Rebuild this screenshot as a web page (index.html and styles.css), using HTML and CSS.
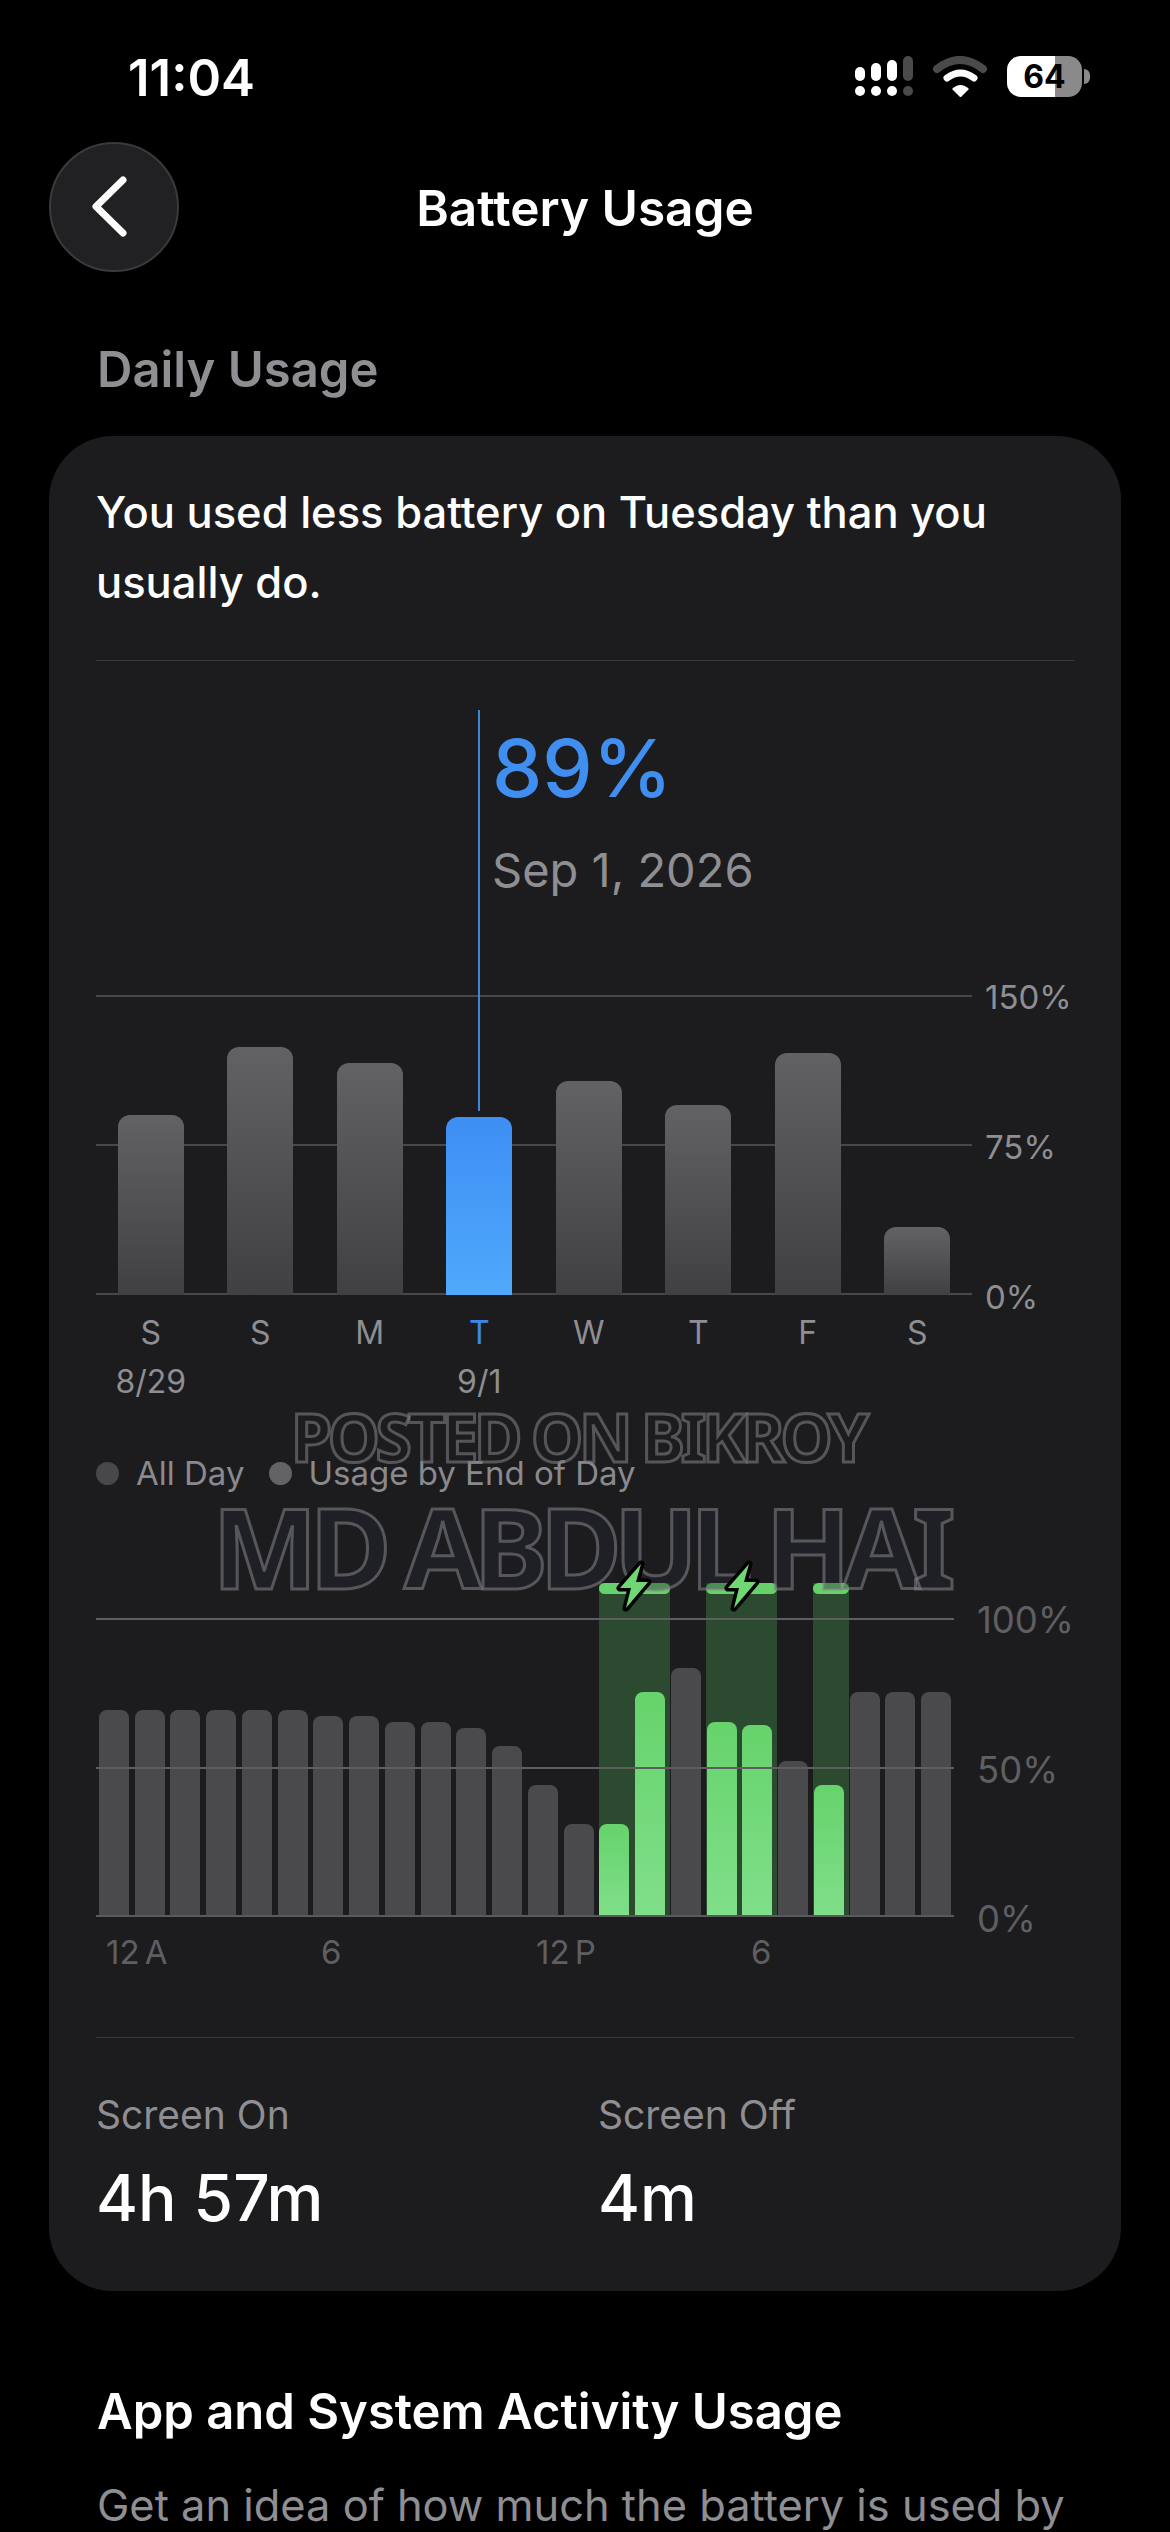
FILE: index.html
```html
<!DOCTYPE html>
<html>
<head>
<meta charset="utf-8">
<title>Battery Usage</title>
<link rel="stylesheet" href="styles.css">
</head>
<body>

<div class="status">
  <div class="time">11:04</div>
  <div class="status-icons">
    <svg class="signal" width="58" height="41" viewBox="0 0 58 41">
      <rect x="0" y="11" width="10" height="14" rx="5" fill="#fff"/>
      <rect x="16" y="7" width="10" height="18" rx="5" fill="#fff"/>
      <rect x="32" y="4" width="10" height="21" rx="5" fill="#fff"/>
      <rect x="48" y="0" width="10" height="25" rx="5" fill="#4a4a4a"/>
      <circle cx="5" cy="35" r="5" fill="#fff"/>
      <circle cx="21" cy="35" r="5" fill="#fff"/>
      <circle cx="37" cy="35" r="5" fill="#fff"/>
      <circle cx="53" cy="35" r="5" fill="#4a4a4a"/>
    </svg>
    <svg class="wifi" width="54" height="41" viewBox="0 0 54 41">
      <path d="M4 13 Q27 -5 50 13" fill="none" stroke="#4a4a4a" stroke-width="8" stroke-linecap="round"/>
      <path d="M14 22 Q27.5 12 41 22" fill="none" stroke="#fff" stroke-width="7" stroke-linecap="round"/>
      <path d="M19 33 Q27.5 25 36 33 L28.5 40.5 Q27.5 41.5 26.5 40.5 Z" fill="#fff"/>
    </svg>
    <div class="battery">64</div>
  </div>
</div>

<div class="nav">
  <div class="back">
    <svg width="38" height="61" viewBox="0 0 38 61">
      <path d="M33 4 L6 30.5 L33 57" fill="none" stroke="#fff" stroke-width="7" stroke-linecap="round" stroke-linejoin="round"/>
    </svg>
  </div>
  <div class="nav-title">Battery Usage</div>
</div>

<h2 class="section-title">Daily Usage</h2>

<div class="card">
  <p class="summary">You used less battery on Tuesday than you usually do.</p>
  <div class="divider"></div>

  <div class="callout">
    <div class="callout-value">89%</div>
    <div class="callout-date">Sep 1, 2026</div>
  </div>

  <div class="chart-row">
    <div class="week-plot">
      <div class="week-slot"><div class="week-bar" style="height:180px"></div></div>
      <div class="week-slot"><div class="week-bar" style="height:248px"></div></div>
      <div class="week-slot"><div class="week-bar" style="height:232px"></div></div>
      <div class="week-slot"><div class="week-bar week-bar-on" style="height:178px"><div class="marker"></div></div></div>
      <div class="week-slot"><div class="week-bar" style="height:214px"></div></div>
      <div class="week-slot"><div class="week-bar" style="height:190px"></div></div>
      <div class="week-slot"><div class="week-bar" style="height:242px"></div></div>
      <div class="week-slot"><div class="week-bar" style="height:68px"></div></div>
    </div>
    <div class="axis week-axis">
      <span>150%</span>
      <span>75%</span>
      <span>0%</span>
    </div>
  </div>

  <div class="week-labels">
    <span>S</span><span>S</span><span>M</span><span class="label-on">T</span><span>W</span><span>T</span><span>F</span><span>S</span>
  </div>
  <div class="week-dates">
    <span>8/29</span><span></span><span></span><span>9/1</span><span></span><span></span><span></span><span></span>
  </div>

  <div class="legend">
    <i class="dot"></i><span>All Day</span>
    <i class="dot dot-light"></i><span>Usage by End of Day</span>
  </div>

  <div class="chart-row">
    <div class="hour-plot">
      <div class="charge-layer">
        <div class="charge charge-a">
          <svg class="bolt" width="40" height="55" viewBox="0 0 40 55"><path d="M27 6 L6 30 H17 L12 50 L34 24 H22 Z" fill="#6fd873" stroke="#000" stroke-width="7" stroke-linejoin="round" paint-order="stroke"/></svg>
        </div>
        <div class="charge charge-b">
          <svg class="bolt" width="40" height="55" viewBox="0 0 40 55"><path d="M27 6 L6 30 H17 L12 50 L34 24 H22 Z" fill="#6fd873" stroke="#000" stroke-width="7" stroke-linejoin="round" paint-order="stroke"/></svg>
        </div>
        <div class="charge charge-c"></div>
      </div>
      <div class="hour-bars">
        <div class="hour-bar" style="height:207px"></div>
        <div class="hour-bar" style="height:207px"></div>
        <div class="hour-bar" style="height:207px"></div>
        <div class="hour-bar" style="height:207px"></div>
        <div class="hour-bar" style="height:207px"></div>
        <div class="hour-bar" style="height:207px"></div>
        <div class="hour-bar" style="height:201px"></div>
        <div class="hour-bar" style="height:201px"></div>
        <div class="hour-bar" style="height:195px"></div>
        <div class="hour-bar" style="height:195px"></div>
        <div class="hour-bar" style="height:189px"></div>
        <div class="hour-bar" style="height:171px"></div>
        <div class="hour-bar" style="height:132px"></div>
        <div class="hour-bar" style="height:93px"></div>
        <div class="hour-bar hour-bar-green" style="height:93px"></div>
        <div class="hour-bar hour-bar-green" style="height:225px"></div>
        <div class="hour-bar" style="height:249px"></div>
        <div class="hour-bar hour-bar-green" style="height:195px"></div>
        <div class="hour-bar hour-bar-green" style="height:192px"></div>
        <div class="hour-bar" style="height:156px"></div>
        <div class="hour-bar hour-bar-green" style="height:132px"></div>
        <div class="hour-bar" style="height:225px"></div>
        <div class="hour-bar" style="height:225px"></div>
        <div class="hour-bar" style="height:225px"></div>
      </div>
    </div>
    <div class="axis hour-axis">
      <span>100%</span>
      <span>50%</span>
      <span>0%</span>
    </div>
  </div>

  <div class="hour-labels">
    <span>12 A</span><span>6</span><span>12 P</span><span>6</span>
  </div>

  <div class="divider divider-low"></div>

  <div class="stats">
    <div>
      <div class="stat-label">Screen On</div>
      <div class="stat-value">4h 57m</div>
    </div>
    <div>
      <div class="stat-label">Screen Off</div>
      <div class="stat-value">4m</div>
    </div>
  </div>

  <div class="mark mark-posted">POSTED ON BIKROY</div>
  <div class="mark mark-name">MD ABDUL HAI</div>
</div>

<h3 class="activity-title">App and System Activity Usage</h3>
<p class="activity-text">Get an idea of how much the battery is used by</p>

</body>
</html>
```
FILE: styles.css
```css
html, body
{
  margin:0;
  padding:0;
  height:2532px;
  overflow:hidden;
  background-color:#000;
  color:#fff;
  font-family:"Inter","Liberation Sans",sans-serif;
}

/* status bar */
.status
{
  height:141px;
  box-sizing:border-box;
  padding:56px 88px 0 128px;
  display:flex;
  justify-content:space-between;
}
.time
{
  padding-top:1px;
  font-size:51px;
  font-weight:600;
  line-height:42px;
}
.status-icons
{
  display:flex;
  align-items:flex-start;
  gap:20px;
}
.battery
{
  position:relative;
  width:75px;
  height:41px;
  border-radius:14px;
  background:linear-gradient(to right,#fff 64%,#8a8a8a 64%);
  color:#000;
  font-size:32px;
  font-weight:700;
  line-height:41px;
  text-align:center;
}
.battery:after
{
  content:"";
  position:absolute;
  left:77px;
  top:13px;
  width:6px;
  height:15px;
  border-radius:0 8px 8px 0;
  background-color:#8a8a8a;
}

/* nav */
.nav
{
  height:131px;
  padding:0 49px;
  display:grid;
  grid-template-columns:130px 1fr 130px;
  align-items:center;
}
.back
{
  width:130px;
  height:130px;
  box-sizing:border-box;
  border-radius:50%;
  background-color:#212123;
  border:2px solid #3a3a3c;
  display:flex;
  align-items:center;
  justify-content:center;
  padding-right:10px;
}
.nav-title
{
  padding-top:2px;
  text-align:center;
  font-size:49.5px;
  font-weight:600;
}
.section-title
{
  margin:72px 0 40px 97px;
  font-size:49px;
  line-height:52px;
  font-weight:600;
  color:#8e8e93;
}

/* card */
.card
{
  position:relative;
  margin:0 49px;
  padding:41px 47px 55px;
  border-radius:64px;
  background-color:#1c1c1e;
}
.summary
{
  margin:0;
  font-size:43.5px;
  line-height:70px;
  font-weight:500;
}
.divider
{
  margin-top:43px;
  height:1px;
  background-color:#38383a;
}
.divider-low
{
  margin-top:65px;
}
.callout
{
  height:334px;
  box-sizing:border-box;
  padding:62px 0 0 396px;
}
.callout-value
{
  font-size:80px;
  line-height:90px;
  font-weight:500;
  color:#3f8ef0;
}
.callout-date
{
  margin-top:29px;
  font-size:47px;
  line-height:56px;
  color:#8e8e93;
}

/* charts */
.chart-row
{
  display:flex;
}
.axis
{
  display:flex;
  flex-direction:column;
  justify-content:space-between;
  margin:-18px 0 -22px;
}
.axis span
{
  line-height:40px;
}
.week-axis
{
  margin-left:13px;
  font-size:33px;
  color:#8e8e93;
}
.hour-axis
{
  margin-top:107px;
  margin-left:23px;
  font-size:36.5px;
  color:#5f5f63;
}
.week-plot
{
  width:876px;
  height:300px;
  display:flex;
  align-items:flex-end;
  background:
    linear-gradient(#48484a,#48484a) 0 0/100% 2px no-repeat,
    linear-gradient(#48484a,#48484a) 0 50%/100% 2px no-repeat,
    linear-gradient(#48484a,#48484a) 0 100%/100% 2px no-repeat;
}
.week-slot
{
  flex:1;
  display:flex;
  justify-content:center;
}
.week-bar
{
  position:relative;
  width:66px;
  border-radius:12px 12px 0 0;
  background:linear-gradient(#626265,#404042);
}
.week-bar-on
{
  background:linear-gradient(#3e8ef4,#4fa9fb);
}
.marker
{
  position:absolute;
  left:32px;
  bottom:100%;
  margin-bottom:6px;
  width:2px;
  height:401px;
  background-color:#3f86d6;
}
.week-labels, .week-dates
{
  width:876px;
  display:grid;
  grid-template-columns:repeat(8,1fr);
  text-align:center;
  font-size:32px;
  line-height:40px;
  color:#8e8e93;
}
.week-labels
{
  margin-top:18px;
}
.week-dates
{
  margin-top:9px;
}
.label-on
{
  color:#3f86e8;
}
.legend
{
  margin-top:51px;
  display:flex;
  align-items:center;
  font-size:33px;
  line-height:40px;
  color:#8a8a8e;
}
.dot
{
  width:23px;
  height:23px;
  border-radius:50%;
  margin-right:17px;
  background-color:#48484a;
}
.dot-light
{
  margin-left:25px;
  margin-right:16px;
  background-color:#636366;
}
.hour-plot
{
  position:relative;
  margin-top:125px;
  width:858px;
  height:299px;
}
.hour-plot:after
{
  content:"";
  position:absolute;
  inset:0;
  background:
    linear-gradient(#5e5e61,#5e5e61) 0 0/100% 2px no-repeat,
    linear-gradient(#5e5e61,#5e5e61) 0 50%/100% 2px no-repeat,
    linear-gradient(#5a5a5d,#5a5a5d) 0 100%/100% 2px no-repeat;
}
.charge-layer
{
  position:absolute;
  top:-35px;
  bottom:0;
  left:2px;
  right:-2px;
  display:grid;
  grid-template-columns:repeat(24,1fr);
}
.charge
{
  position:relative;
  background-color:#2b4a2f;
}
.charge:before
{
  content:"";
  position:absolute;
  left:0;
  right:0;
  top:0;
  height:11px;
  border-radius:6px;
  background-color:#66d06a;
}
.charge-a
{
  grid-column:15 / 17;
}
.charge-b
{
  grid-column:18 / 20;
}
.charge-c
{
  grid-column:21 / 22;
}
.bolt
{
  position:absolute;
  left:50%;
  top:-25px;
  margin-left:-20px;
  z-index:3;
}
.hour-bars
{
  position:relative;
  height:100%;
  display:grid;
  grid-template-columns:repeat(24,1fr);
  align-items:end;
  justify-items:center;
}
.hour-bar
{
  width:30px;
  border-radius:8px 8px 0 0;
  background-color:#4a4a4d;
}
.hour-bar-green
{
  background:linear-gradient(#66d36b,#80df8a);
}
.hour-labels
{
  margin-top:15px;
  width:858px;
  display:grid;
  grid-template-columns:215px 215px 215px 1fr;
  font-size:33px;
  line-height:40px;
  color:#5f5f63;
}
.hour-labels span
{
  padding-left:10px;
  word-spacing:-4px;
}

/* screen on / off */
.stats
{
  padding-top:53px;
  display:grid;
  grid-template-columns:502px 1fr;
}
.stat-label
{
  font-size:39px;
  line-height:48px;
  color:#8e8e93;
}
.stat-value
{
  margin-top:21px;
  font-size:64px;
  line-height:76px;
  font-weight:500;
}

/* watermark */
.mark
{
  position:absolute;
  font-family:"Noto Sans",sans-serif;
  font-weight:700;
  white-space:nowrap;
  -webkit-text-stroke:3px rgba(125,125,130,0.6);
}
.mark-posted
{
  left:242px;
  top:960px;
  font-size:66px;
  line-height:80px;
  letter-spacing:-4.3px;
  color:rgba(28,28,30,0.2);
}
.mark-name
{
  left:163px;
  top:1045px;
  font-size:112px;
  line-height:130px;
  letter-spacing:-8.2px;
  color:rgba(35,40,50,0.4);
}

.activity-title
{
  margin:91px 0 0 97px;
  font-size:49px;
  line-height:60px;
  font-weight:600;
}
.activity-text
{
  margin:33px 0 0 97px;
  font-size:43.4px;
  line-height:60px;
  white-space:nowrap;
  color:#8e8e93;
}
```
